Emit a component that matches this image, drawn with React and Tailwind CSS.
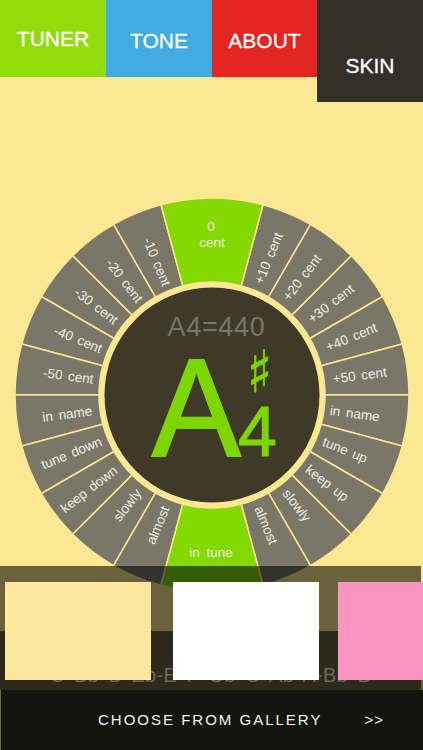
import React from 'react';

const CX = 212;
const CY = 395;
const R_OUT = 197;
const R_IN = 113;

// label + distance from the dial centre, the reference is not quite regular here
const rightLabels = [
  ['+10 cent', 148], ['+20 cent', 148], ['+30 cent', 150], ['+40 cent', 151], ['+50 cent', 149],
  ['in name', 144], ['tune up', 144], ['keep up', 145], ['slowly', 139], ['almost', 141],
];
const leftLabels = [
  ['-10 cent', 144], ['-20 cent', 144], ['-30 cent', 146], ['-40 cent', 145], ['-50 cent', 145],
  ['in name', 146], ['tune down', 152], ['keep down', 155], ['slowly', 139], ['almost', 141],
];

const pt = (r, deg) => {
  const a = (deg * Math.PI) / 180;
  return [CX + r * Math.sin(a), CY - r * Math.cos(a)];
};

const sector = (from, to) => {
  const [x1, y1] = pt(R_IN, from);
  const [x2, y2] = pt(R_OUT, from);
  const [x3, y3] = pt(R_OUT, to);
  const [x4, y4] = pt(R_IN, to);
  return `M${x1} ${y1} L${x2} ${y2} A${R_OUT} ${R_OUT} 0 0 1 ${x3} ${y3} L${x4} ${y4} A${R_IN} ${R_IN} 0 0 0 ${x1} ${y1} Z`;
};

const Label = ({ deg, r, children }) => {
  const [x, y] = pt(r, deg);
  const rot = deg < 180 ? deg - 90 : deg - 270;
  return (
    <text
      x={x}
      y={y}
      transform={`rotate(${rot} ${x} ${y})`}
      textAnchor="middle"
      dominantBaseline="central"
      fill="#eeeee6"
      fontSize="13.5"
      wordSpacing="2"
    >
      {children}
    </text>
  );
};

const Dial = () => {
  const segments = [];
  for (let i = 0; i < 10; i++) {
    segments.push({ from: 15 + i * 15, to: 30 + i * 15, label: rightLabels[i] });
    segments.push({ from: 330 - i * 15, to: 345 - i * 15, label: leftLabels[i] });
  }
  return (
    <svg width="423" height="610" viewBox="0 77 423 610" style={{ fontFamily: '"Liberation Sans", Arial, sans-serif' }}>
      {segments.map((s) => (
        <path key={s.from} d={sector(s.from, s.to)} fill="#7a7768" stroke="#fce792" strokeWidth="1.5" />
      ))}
      <path d={sector(-15, 15)} fill="#84d900" stroke="#fce792" strokeWidth="1.5" />
      <path d={sector(165, 195)} fill="#84d900" stroke="#fce792" strokeWidth="1.5" />
      <circle cx={CX} cy={CY} r={R_IN} fill="#fce792" />
      <circle cx={CX} cy={CY} r="107.5" fill="#3f3a27" />
      {segments.map((s) => (
        <Label key={s.from} deg={(s.from + s.to) / 2} r={s.label[1]}>{s.label[0]}</Label>
      ))}
      <text x="211" y="231" textAnchor="middle" fill="#eeeee6" fontSize="13.5">0</text>
      <text x="212" y="247" textAnchor="middle" fill="#eeeee6" fontSize="13.5">cent</text>
      <text x="211" y="557" textAnchor="middle" fill="#eeeee6" fontSize="13.5" wordSpacing="3">in tune</text>
      <text x="216.5" y="336" textAnchor="middle" fill="#77746c" fontSize="27" letterSpacing="0.7">A4=440</text>
      <text transform="translate(152 455.5) scale(0.95 1)" fill="#7ed600" stroke="#7ed600" strokeWidth="2" fontSize="140">A</text>
      <text x="238" y="456" fill="#7ed600" stroke="#7ed600" strokeWidth="1" fontSize="70">4</text>
      <text
        transform="translate(259.5 392) scale(0.9 1)"
        textAnchor="middle"
        fill="#7ed600"
        stroke="#7ed600"
        strokeWidth="0.8"
        fontSize="58"
        style={{ fontFamily: '"DejaVu Sans", sans-serif' }}
      >
        ♯
      </text>
    </svg>
  );
};

const NavItem = ({ className, label }) => (
  <div className={`flex h-[77px] items-center justify-center text-[21px] text-white [-webkit-text-stroke:0.3px_white] ${className}`}>{label}</div>
);

export default function App() {
  return (
    <div className="relative h-[750px] w-[423px] overflow-hidden bg-[#fce792] font-['Liberation_Sans',Arial,sans-serif]">
      <div className="relative z-10 flex h-[77px] items-start">
        <NavItem className="w-[106px] bg-[#93dc0c]" label="TUNER" />
        <NavItem className="w-[106px] bg-[#42abe2] pt-[4px]" label="TONE" />
        <NavItem className="w-[105px] bg-[#e42522] pt-[4px]" label="ABOUT" />
        <div className="flex h-[102px] flex-1 items-end justify-center bg-[#352f29] pb-[21px] text-[21px] text-white [-webkit-text-stroke:0.3px_white]">SKIN</div>
      </div>
      <Dial />
      {/* skin picker laid over the dial */}
      <div className="absolute inset-x-0 bottom-0 flex h-[184px] flex-col">
        <div className="relative flex h-[124px] flex-col">
          <div className="mr-[2px] h-[65px] bg-black/[.58]" />
          <div className="relative h-[59px] bg-[#6a623a]">
            <div className="mr-[2px] h-full bg-[#2e2a1b]" />
            <div className="absolute inset-x-0 bottom-0 flex justify-center pr-[2px] text-[20px] tracking-[0.3px] text-[#6b685c] [word-spacing:3.5px]">C Bb B Eb-E F Gb G Ab A-Bb B</div>
          </div>
          <div className="absolute inset-x-0 top-[16px] flex items-start gap-[22px] overflow-hidden pl-[5px]">
            <div className="h-[98px] w-[146px] shrink-0 bg-[#fde79c]" />
            <div className="h-[98px] w-[146px] shrink-0 bg-white" />
            <div className="ml-[-3px] h-[98px] w-[85px] shrink-0 bg-[#fb94c1]" />
          </div>
        </div>
        <div className="flex flex-1 items-center border-l border-[#5e7a10] bg-[#14150f] text-[15px] text-[#f2f2ee]">
          <span className="ml-[97px] tracking-[2px]">CHOOSE FROM GALLERY</span>
          <span className="ml-[42px] tracking-[1px]">&gt;&gt;</span>
        </div>
      </div>
    </div>
  );
}
